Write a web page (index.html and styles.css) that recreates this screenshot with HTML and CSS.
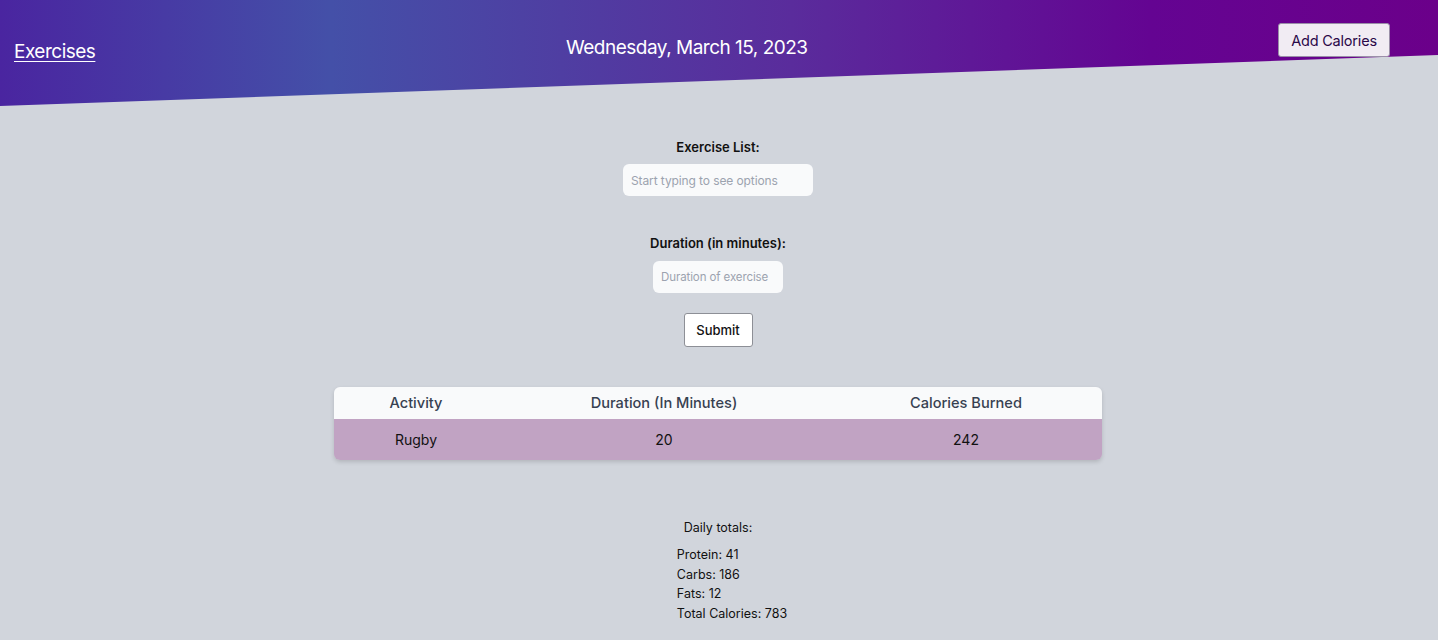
FILE: index.html
```html
<!DOCTYPE html>
<html>
<head>
<meta charset="utf-8">
<link rel="stylesheet" href="styles.css">
</head>
<body>
<header class="hero">
  <a class="nav-link" href="#">Exercises</a>
  <div class="date">Wednesday, March 15, 2023</div>
  <button class="add-btn">Add Calories</button>
</header>
<main class="content">
  <form class="form">
    <label class="label">Exercise List:</label>
    <input class="input input-wide" placeholder="Start typing to see options">
    <label class="label label-gap">Duration (in minutes):</label>
    <input class="input input-narrow" placeholder="Duration of exercise">
    <button type="button" class="submit">Submit</button>
  </form>
  <div class="table">
    <div class="row head">
      <div>Activity</div>
      <div>Duration (In Minutes)</div>
      <div>Calories Burned</div>
    </div>
    <div class="row body">
      <div>Rugby</div>
      <div>20</div>
      <div>242</div>
    </div>
  </div>
  <section class="totals">
    <div class="totals-title">Daily totals:</div>
    <div class="totals-list">
      <div>Protein: 41</div>
      <div>Carbs: 186</div>
      <div>Fats: 12</div>
      <div>Total Calories: 783</div>
    </div>
  </section>
</main>
</body>
</html>
```
FILE: styles.css
```css
* { box-sizing: border-box; }
html, body { margin: 0; padding: 0; }
body {
  background: #d1d5dc;
  font-family: Inter, "Liberation Sans", sans-serif;
  color: #111;
  height: 640px;
  overflow: hidden;
}
.hero {
  height: 106px;
  background: linear-gradient(90deg, #4a25a0 0%, #4450a8 23%, #5a2c9c 55%, #640492 80%, #6b008a 100%);
  clip-path: polygon(0 0, 100% 0, 100% 55px, 0 106px);
  display: flex;
  align-items: flex-start;
  padding: 0 48px 0 14px;
}
.nav-link {
  color: #fff;
  font-size: 19px;
  letter-spacing: -0.5px;
  text-decoration: underline;
  text-underline-offset: 3px;
  margin-top: 40px;
  width: 552px;
}
.date {
  color: #fff;
  font-size: 19px;
  letter-spacing: -0.5px;
  margin-top: 36px;
}
.add-btn {
  margin-top: 23px;
  margin-left: auto;
  width: 112px;
  height: 34px;
  background: #f1ecf3;
  border: 1px solid #9a8fa8;
  border-radius: 3px;
  color: #2a0848;
  font-family: Inter, "Liberation Sans", sans-serif;
  font-size: 14.5px;
  letter-spacing: -0.2px;
  padding: 0;
}
.content {
  display: flex;
  flex-direction: column;
  align-items: center;
  padding-right: 2px;
}
.form {
  display: flex;
  flex-direction: column;
  align-items: center;
  margin-top: 33px;
}
.label {
  font-size: 13px;
  font-weight: 600;
  color: #111;
  line-height: 16px;
}
.label-gap { margin-top: 39px; }
.input {
  margin-top: 9px;
  height: 32px;
  border: none;
  border-radius: 6px;
  background: #f9fafb;
  padding: 0 8px;
  font-family: Inter, "Liberation Sans", sans-serif;
  font-size: 12px;
  letter-spacing: -0.1px;
  color: #111;
}
.input::placeholder { color: #9ca3af; }
.input-wide { width: 190px; }
.input-narrow { width: 130px; font-size: 11.5px; margin-top: 10px; }
.submit {
  margin-top: 20px;
  width: 69px;
  height: 34px;
  background: #fff;
  border: 1px solid #8d8f96;
  border-radius: 3px;
  font-family: Inter, "Liberation Sans", sans-serif;
  font-size: 13px;
  font-weight: 500;
  color: #111;
  padding: 0;
}
.table {
  margin-top: 40px;
  width: 768px;
  border-radius: 6px;
  overflow: hidden;
  box-shadow: 0 2px 4px rgba(0,0,0,0.15);
}
.row {
  display: grid;
  grid-template-columns: 164px 332px 272px;
  text-align: center;
  align-items: center;
}
.head {
  height: 32px;
  background: #f9fafb;
  color: #374151;
  font-size: 14.6px;
  font-weight: 500;
}
.body {
  height: 41px;
  background: #c1a3c3;
  color: #111;
  font-size: 14px;
}
.totals {
  margin-top: 60px;
  display: flex;
  flex-direction: column;
  align-items: center;
  font-size: 12.5px;
  color: #111;
}
.totals-title { line-height: 16px; }
.totals-list {
  margin-top: 9px;
  padding-left: 28px;
  line-height: 19.5px;
}
```
